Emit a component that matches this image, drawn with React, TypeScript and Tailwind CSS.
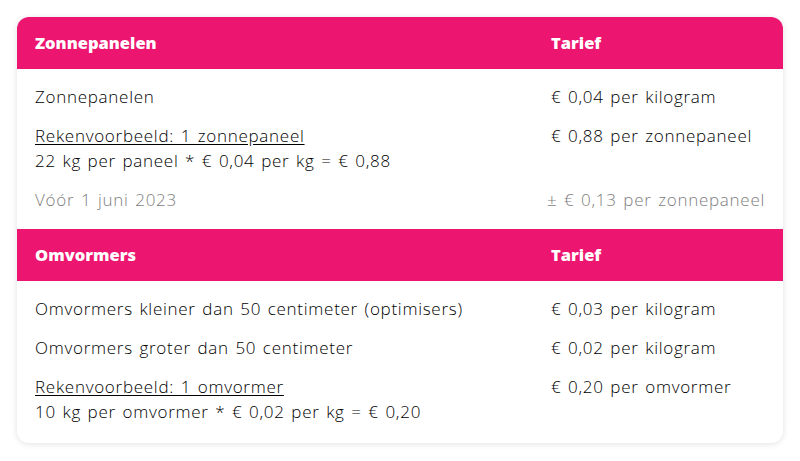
import React from 'react';

type Row = { left: React.ReactNode; right: string; muted?: boolean };

const Section: React.FC<{ title: string; rows: Row[]; last?: boolean }> = ({ title, rows, last }) => (
  <div>
    <div className="flex items-center h-[52px] px-[18px] bg-[#ec1570] text-white font-extrabold text-[16.5px] tracking-normal [word-spacing:0px]">
      <div className="w-[516px]">{title}</div>
      <div className="flex-1">Tarief</div>
    </div>
    <div className={`pt-[8px] ${last ? 'pb-[12px]' : 'pb-[10px]'}`}>
      {rows.map((r, i) => (
        <div
          key={i}
          className={`flex px-[18px] py-[7px] leading-[25px] ${r.muted ? 'text-[#7d7d7d]' : 'text-black'}`}
        >
          <div className="w-[516px]">{r.left}</div>
          <div className="flex-1 whitespace-nowrap">{r.right}</div>
        </div>
      ))}
    </div>
  </div>
);

export default function App() {
  return (
    <div className="bg-white w-[800px] h-[461px] pt-[17px] px-[17px]" style={{ fontFamily: "'Open Sans', sans-serif" }}>
      <div className="rounded-[12px] overflow-hidden bg-white shadow-[0_1px_6px_rgba(0,0,0,0.12)] text-[17px] font-light tracking-[0.72px] [word-spacing:1.5px]">
        <Section
          title="Zonnepanelen"
          rows={[
            { left: 'Zonnepanelen', right: '€ 0,04 per kilogram' },
            {
              left: (
                <>
                  <div className="underline underline-offset-2">Rekenvoorbeeld: 1 zonnepaneel</div>
                  <div>22 kg per paneel * € 0,04 per kg = € 0,88</div>
                </>
              ),
              right: '€ 0,88 per zonnepaneel',
            },
            { left: 'Vóór 1 juni 2023', right: '± € 0,13 per zonnepaneel', muted: true },
          ]}
        />
        <Section
          title="Omvormers"
          last
          rows={[
            { left: 'Omvormers kleiner dan 50 centimeter (optimisers)', right: '€ 0,03 per kilogram' },
            { left: 'Omvormers groter dan 50 centimeter', right: '€ 0,02 per kilogram' },
            {
              left: (
                <>
                  <div className="underline underline-offset-2">Rekenvoorbeeld: 1 omvormer</div>
                  <div>10 kg per omvormer * € 0,02 per kg = € 0,20</div>
                </>
              ),
              right: '€ 0,20 per omvormer',
            },
          ]}
        />
      </div>
    </div>
  );
}
